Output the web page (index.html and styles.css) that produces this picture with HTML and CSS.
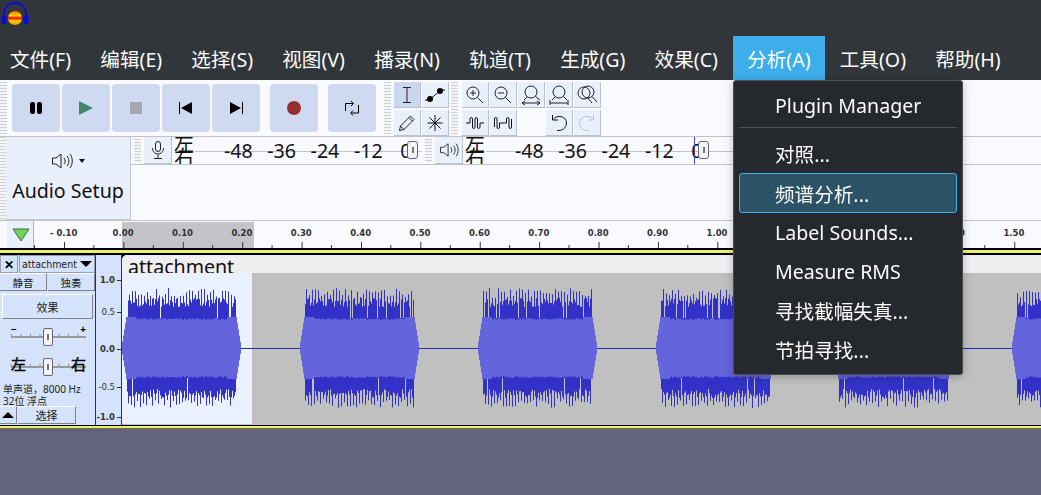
FILE: index.html
```html
<!DOCTYPE html>
<html lang="zh">
<head>
    <meta charset="UTF-8">
    <title>Audacity</title>
    <link rel="stylesheet" href="styles.css">
</head>
<body>
<div class="titlebar">
    <svg class="logo" width="30" height="28" viewBox="0 0 30 28">
        <defs>
            <linearGradient id="wave" x1="0" y1="0" x2="0" y2="1">
                <stop offset="0" stop-color="#f07000"/><stop offset=".35" stop-color="#ffd800"/>
                <stop offset=".46" stop-color="#f03010"/><stop offset=".56" stop-color="#f03010"/>
                <stop offset=".7" stop-color="#ffd800"/><stop offset="1" stop-color="#f09000"/>
            </linearGradient>
        </defs>
        <path d="M4 18 C3 6 9 3 15 3 C21 3 27 6 26 18" fill="none" stroke="#0a0ae0" stroke-width="1.8"/>
        <rect x="1.5" y="15" width="5" height="9" rx="2.5" fill="#0a0ae0"/>
        <rect x="23.5" y="15" width="5" height="9" rx="2.5" fill="#0a0ae0"/>
        <ellipse cx="15" cy="18" rx="7" ry="7" fill="url(#wave)"/>
    </svg>
</div>

<nav class="menubar">
    <span class="menu-item">文件(F)</span>
    <span class="menu-item">编辑(E)</span>
    <span class="menu-item">选择(S)</span>
    <span class="menu-item">视图(V)</span>
    <span class="menu-item">播录(N)</span>
    <span class="menu-item">轨道(T)</span>
    <span class="menu-item">生成(G)</span>
    <span class="menu-item">效果(C)</span>
    <span class="menu-item active">分析(A)</span>
    <span class="menu-item">工具(O)</span>
    <span class="menu-item">帮助(H)</span>
</nav>

<!-- analyze menu, open -->
<div class="dropdown">
    <div class="drop-row">Plugin Manager</div>
    <div class="drop-sep"></div>
    <div class="drop-row">对照...</div>
    <div class="drop-row selected">频谱分析...</div>
    <div class="drop-row">Label Sounds...</div>
    <div class="drop-row">Measure RMS</div>
    <div class="drop-row">寻找截幅失真...</div>
    <div class="drop-row">节拍寻找...</div>
</div>

<div class="toolbar">
    <div class="grip first"></div>
    <div class="transport">
        <button class="tbtn"><svg width="16" height="16" viewBox="0 0 16 16"><rect x="2" y="2" width="5" height="12" rx="2"/><rect x="9" y="2" width="5" height="12" rx="2"/></svg></button>
        <button class="tbtn"><svg width="16" height="16" viewBox="0 0 16 16"><path d="M1 1 L15 8 L1 15 Z" fill="#46876b"/></svg></button>
        <button class="tbtn"><svg width="14" height="14" viewBox="0 0 14 14"><rect x="1" y="1" width="12" height="12" fill="#a6a9b2"/></svg></button>
        <button class="tbtn"><svg width="16" height="14" viewBox="0 0 16 14"><rect x="1" y="1" width="1" height="12"/><path d="M3 7 L14 1 V13 Z"/></svg></button>
        <button class="tbtn"><svg width="16" height="14" viewBox="0 0 16 14"><rect x="14" y="1" width="1" height="12"/><path d="M13 7 L2 1 V13 Z"/></svg></button>
        <button class="tbtn spaced"><svg width="16" height="16" viewBox="0 0 16 16"><circle cx="8" cy="8" r="7" fill="#963030"/></svg></button>
        <button class="tbtn spaced"><svg width="16" height="18" viewBox="0 0 16 18" fill="none" stroke="#000"><path d="M1.5 12 V4.5 H9 M14.5 6 V14 H7"/><path d="M7 2 L9.5 4.5 L7 7 M9 11.5 L6.5 14 L9 16.5"/></svg></button>
    </div>
    <div class="grip second"></div>
    <div class="tools">
        <button class="sbtn on"><svg width="18" height="18" viewBox="0 0 18 18" fill="none" stroke="#222"><path d="M5 1.5 H13 M5 16.5 H13 M9 1.5 V16.5"/></svg></button>
        <button class="sbtn"><svg width="22" height="16" viewBox="0 0 22 16"><path d="M1 13 H5 L17 3 H21" fill="none" stroke="#111"/><circle cx="6" cy="12" r="3"/><circle cx="16" cy="4" r="3"/></svg></button>
        <button class="sbtn"><svg width="18" height="18" viewBox="0 0 18 18" fill="none" stroke="#222"><path d="M1.5 16.5 L2.5 12 L12.5 2 L16 5.5 L6 15.5 Z M11 3.5 L14.5 7 M2.5 12 L6 15.5"/></svg></button>
        <button class="sbtn"><svg width="18" height="18" viewBox="0 0 18 18" fill="none" stroke="#111"><path d="M9 1 V17 M1.5 9 H16.5 M3.5 3.5 L14.5 14.5 M14.5 3.5 L3.5 14.5"/></svg></button>
    </div>
    <div class="grip third"></div>
    <div class="zooms">
        <button class="sbtn"><svg width="20" height="20" viewBox="0 0 20 20" fill="none" stroke="#222"><circle cx="8" cy="8" r="6"/><path d="M12.5 12.5 L18 18 M5 8 H11 M8 5 V11"/></svg></button>
        <button class="sbtn"><svg width="20" height="20" viewBox="0 0 20 20" fill="none" stroke="#222"><circle cx="8" cy="8" r="6"/><path d="M12.5 12.5 L18 18 M5 8 H11"/></svg></button>
        <button class="sbtn"><svg width="22" height="22" viewBox="0 0 22 22" fill="none" stroke="#222"><circle cx="11" cy="8" r="6"/><path d="M15.5 12.5 L20 16 M7 13 L4 16 M2 19 H20 M2 19 L5 17 M2 19 L5 21 M20 19 L17 17 M20 19 L17 21"/></svg></button>
        <button class="sbtn"><svg width="22" height="22" viewBox="0 0 22 22" fill="none" stroke="#222"><circle cx="11" cy="8" r="6"/><path d="M15.5 12.5 L19 16 M7 13 L4 16 M2 19 H20 M2 16 V21 M20 16 V21"/></svg></button>
        <button class="sbtn"><svg width="22" height="20" viewBox="0 0 22 20" fill="none" stroke="#222"><circle cx="8" cy="8" r="6"/><circle cx="12" cy="7" r="6"/><path d="M16 11.5 L21 17 M11 12 L16 18"/></svg></button>
        <button class="sbtn"><svg width="18" height="12" viewBox="0 0 18 12" fill="none" stroke="#111"><path d="M0 6 H4 V2 Q4 .5 5.2 .5 Q6.5 .5 6.5 2 V10 Q6.5 11.5 7.7 11.5 Q9 11.5 9 10 V2 Q9 .5 10.2 .5 Q11.5 .5 11.5 2 V10 Q11.5 11.5 12.7 11.5 Q14 11.5 14 10 V6 H18"/></svg></button>
        <button class="sbtn"><svg width="18" height="12" viewBox="0 0 18 12" fill="none" stroke="#111"><path d="M.5 10 V2 Q.5 .5 1.7 .5 Q3 .5 3 2 V10 Q3 11.5 4.2 11.5 Q5.5 11.5 5.5 10 V6 H12.5 V2 Q12.5 .5 13.7 .5 Q15 .5 15 2 V10 Q15 11.5 16.2 11.5 Q17.5 11.5 17.5 10 V2"/></svg></button>
        <span class="sblank"></span>
        <button class="sbtn"><svg width="20" height="20" viewBox="0 0 20 20" fill="none" stroke="#111"><path d="M4.5 6 C8 1.5 17.5 3 17.5 10 C17.5 15 13 18 8 17.5"/><path d="M3.5 2 V7 H9"/></svg></button>
        <button class="sbtn"><svg width="20" height="20" viewBox="0 0 20 20" fill="none" stroke="#bcc0c6"><path d="M15.5 6 C12 1.5 2.5 3 2.5 10 C2.5 15 7 18 12 17.5"/><path d="M16.5 2 V7 H11"/></svg></button>
    </div>
</div>

<div class="midrow">
    <div class="grip setup-grip"></div>
    <div class="audio-setup">
        <div class="setup-icon">
            <svg width="22" height="18" viewBox="0 0 22 18" fill="none" stroke="#222"><path d="M1.5 6 H5 L10 2 V16 L5 12 H1.5 Z M13 6 C14.5 8 14.5 10 13 12 M16 4 C18.5 7 18.5 11 16 14 M19 2 C22 6 22 12 19 16"/></svg>
            <i class="caret"></i>
        </div>
        <div class="setup-label">Audio Setup</div>
    </div>
    <div class="meters">
        <div class="grip meter-grip"></div>
        <button class="mbtn"><svg width="14" height="20" viewBox="0 0 14 20" fill="none" stroke="#222"><rect x="4.5" y="1.5" width="5" height="10" rx="2.5"/><path d="M1.5 8 C1.5 16 12.5 16 12.5 8 M7 14.5 V18.5 M3 18.5 H11"/></svg></button>
        <div class="lr"><span>左</span><span>右</span></div>
        <div class="meter rec">
            <span class="tick">-48</span><span class="tick">-36</span><span class="tick">-24</span><span class="tick">-12</span><span class="tick last">0</span>
            <i class="thumb"></i>
        </div>
        <div class="grip meter-grip"></div>
        <button class="mbtn"><svg width="20" height="16" viewBox="0 0 22 18" fill="none" stroke="#222"><path d="M1.5 6 H5 L10 2 V16 L5 12 H1.5 Z M13 6 C14.5 8 14.5 10 13 12 M16 4 C18.5 7 18.5 11 16 14 M19 2 C22 6 22 12 19 16"/></svg></button>
        <div class="lr"><span>左</span><span>右</span></div>
        <div class="meter play">
            <span class="tick">-48</span><span class="tick">-36</span><span class="tick">-24</span><span class="tick">-12</span><span class="tick last">0</span>
            <i class="thumb"></i><i class="cursor"></i>
        </div>
    </div>
</div>

<div class="timeline">
    <div class="pin"><svg width="20" height="16" viewBox="0 0 20 16"><path d="M2 2 H18 L10 14 Z" fill="#6fd45c" stroke="#3c6a38"/></svg></div>
    <div class="ruler">
        <span>- 0.10</span><span>0.00</span><span>0.10</span><span>0.20</span><span>0.30</span><span>0.40</span><span>0.50</span><span>0.60</span><span>0.70</span><span>0.80</span><span>0.90</span><span>1.00</span><span>1.10</span><span>1.20</span><span>1.30</span><span>1.40</span><span>1.50</span>
    </div>
</div>

<div class="edge top"></div>

<div class="track">
    <div class="panel">
        <div class="panel-head">
            <button class="close">✕</button>
            <div class="track-name">attachment<i class="name-caret"></i></div>
        </div>
        <div class="mute-row"><button>静音</button><button>独奏</button></div>
        <button class="fx">效果</button>
        <div class="slider gain"><b>−</b><b>+</b><i class="knob"></i></div>
        <div class="slider pan"><b>左</b><b>右</b><i class="knob"></i></div>
        <div class="info">单声道，8000 Hz<br>32位 浮点</div>
        <div class="panel-foot"><button class="collapse"><i></i></button><button class="pick">选择</button></div>
    </div>
    <div class="vruler"><span>1.0</span><span>0.5</span><span>0.0</span><span>-0.5</span><span>-1.0</span></div>
    <div class="clip">
        <div class="clip-title">attachment</div>
        <canvas id="wave-canvas" width="919" height="151"></canvas>
    </div>
</div>

<div class="edge bottom"></div>

<script src="waveform.js"></script>
</body>
</html>
```

FILE: styles.css
```css
* {
    box-sizing: border-box;
}
body {
    font-family: "Noto Sans", "Noto Sans CJK SC", sans-serif;
    background-color: #62637f;
    margin: 0;
    width: 1041px;
    height: 495px;
    overflow: hidden;
    position: relative;
}
button {
    font-family: inherit;
    padding: 0;
    border: none;
    display: flex;
    align-items: center;
    justify-content: center;
}

/* title and menu */
.titlebar {
    height: 36px;
    background-color: #31363b;
}
.logo {
    display: block;
}
.menubar {
    height: 44px;
    background-color: #31363b;
    display: flex;
    color: #fcfcfc;
    font-size: 19.6px;
}
.menu-item {
    padding: 0 14.6px;
    display: flex;
    align-items: center;
    white-space: nowrap;
}
.menu-item:first-child {
    padding-left: 10px;
}
.menu-item.active {
    background-color: #3daee9;
}
.dropdown {
    position: absolute;
    left: 733px;
    top: 80px;
    width: 230px;
    height: 295px;
    background-color: #25282c;
    border: 1px solid #4b4e52;
    border-radius: 3px;
    box-shadow: 0 2px 8px rgba(0, 0, 0, .25);
    padding: 5px 5px;
    color: #fcfcfc;
    font-size: 19.6px;
    z-index: 5;
}
.drop-row {
    height: 39px;
    padding-left: 35px;
    display: flex;
    align-items: center;
    border: 1px solid transparent;
    border-radius: 3px;
}
.drop-row.selected {
    height: 40px;
    background-color: #2c5266;
    border-color: #3daee9;
}
.drop-sep {
    height: 1px;
    background-color: #4b4e52;
    margin: 2px 0 6px;
}

/* toolbars */
.toolbar {
    height: 57px;
    background-color: #f9faff;
    border-bottom: 1px solid #c2c2c2;
    display: flex;
    position: relative;
}
.grip {
    width: 7px;
    background-image: repeating-linear-gradient(#cfd0d4 0 1px, transparent 1px 3px);
    background-color: #f4f5f8;
}
.grip.first {
    margin: 2px 5px 2px 0;
}
.grip.second {
    margin: 2px 3px 2px 8px;
}
.grip.third {
    margin: 2px 4px 2px 2px;
}
.transport {
    display: flex;
    gap: 2px;
    padding-top: 4px;
}
.tbtn {
    width: 48px;
    height: 48px;
    background-color: #cfdaf0;
    border-radius: 4px;
}
.tbtn.spaced {
    margin-left: 8px;
}
.tools {
    display: grid;
    grid-template-columns: 27px 27px;
    grid-auto-rows: 26px;
    gap: 2px 1px;
    padding-top: 2px;
}
.zooms {
    display: grid;
    grid-template-columns: repeat(5, 27px);
    grid-auto-rows: 26px;
    gap: 2px 1px;
    padding-top: 2px;
}
.sbtn {
    background-color: #e9f0fb;
    border-right: 1px solid #bcc0c8;
    border-bottom: 1px solid #bcc0c8;
}
.sbtn.on {
    background-color: #c9d8f0;
}
.midrow {
    height: 84px;
    background-color: #f9faff;
    border-bottom: 1px solid #c2c2c2;
    display: flex;
}
.grip.setup-grip {
    width: 6px;
}
.audio-setup {
    width: 125px;
    background-color: #e9f0fb;
    border-right: 1px solid #c2c6d0;
    border-bottom: 1px solid #c2c6d0;
    text-align: center;
    color: #111;
}
.setup-icon {
    height: 39px;
    display: flex;
    align-items: center;
    justify-content: center;
    gap: 6px;
    padding-top: 9px;
}
.caret {
    width: 0;
    height: 0;
    border-left: 3px solid transparent;
    border-right: 3px solid transparent;
    border-top: 4px solid #111;
}
.setup-label {
    font-size: 19.6px;
    line-height: 30px;
}
.meters {
    flex: 1;
    height: 28px;
    border-bottom: 1px solid #c2c2c2;
    display: flex;
}
.grip.meter-grip {
    margin: 2px 3px 2px 3px;
}
.mbtn {
    width: 28px;
    height: 27px;
    background-color: #e9f0fb;
    border-right: 1px solid #bcc0c8;
    border-bottom: 1px solid #bcc0c8;
}
.lr {
    width: 23px;
    padding-left: 2px;
    height: 27px;
    overflow: hidden;
    font-size: 20px;
    line-height: 14px;
    color: #111;
}
.lr span {
    display: block;
}
.meter {
    position: relative;
    height: 27px;
    display: flex;
    font-size: 19.6px;
    line-height: 27px;
    color: #111;
    background: linear-gradient(#c2c2c2, #c2c2c2) 0 14px / 100% 1px no-repeat;
}
.meter.rec {
    width: 227px;
    padding-left: 29px;
}
.meter.play {
    width: 280px;
    padding-left: 29px;
    border-right: 1px solid #c2c2c2;
}
.tick {
    flex: 0 0 43.3px;
    white-space: nowrap;
}
.tick.last {
    margin-left: 3px;
}
.thumb {
    position: absolute;
    top: 4px;
    left: 212px;
    width: 11px;
    height: 18px;
    background: linear-gradient(#777, #777) center / 2px 6px no-repeat #f4f4f6;
    border: 1px solid #666;
    border-radius: 3px;
}
.cursor {
    position: absolute;
    left: 208px;
    top: 0;
    width: 1px;
    height: 27px;
    background-color: #4040e0;
}

/* ruler */
.timeline {
    height: 27px;
    background-color: #f9faff;
    display: flex;
}
.pin {
    margin-left: 7px;
    flex: 0 0 27px;
    padding-left: 2px;
    background-color: #e9f0fb;
    border-right: 1px solid #b0b4bc;
    display: flex;
    align-items: center;
    justify-content: center;
}
.ruler {
    flex: 1;
    min-width: 0;
    overflow: hidden;
    display: flex;
    font-family: "DejaVu Sans", sans-serif;
    font-size: 8.5px;
    font-weight: bold;
    color: #333;
    background:
        linear-gradient(90deg, #333 1px, transparent 1px) 30px 100% / 59.4px 6px repeat-x,
        linear-gradient(90deg, #333 1px, transparent 1px) 0 100% / 59.4px 3px repeat-x,
        linear-gradient(#c4c4c8, #c4c4c8) 88px 1px / 132px 26px no-repeat;
}
.ruler span {
    flex: 0 0 59.4px;
    text-align: center;
    line-height: 25px;
    height: 25px;
    white-space: nowrap;
}
.edge {
    background: linear-gradient(#000 0 2px, #f0f06a 2px 5px, #000 5px);
}
.edge.top {
    height: 7px;
}
.edge.bottom {
    height: 5px;
    background: linear-gradient(#000 0 1px, #f0f06a 1px 3px, #6a6a60 3px);
}

/* track */
.track {
    height: 170px;
    display: flex;
    background-color: #000;
}
.panel {
    width: 96px;
    background-color: #d4e2fb;
    border-right: 1px solid #333;
    font-size: 10.5px;
    color: #222;
    position: relative;
}
.panel-head {
    display: flex;
    height: 18px;
    gap: 1px;
}
.close {
    width: 18px;
    background-color: #d4e2fb;
    border: 1px solid #9aa0ac;
    font-size: 12px;
    font-weight: bold;
    color: #000;
}
.track-name {
    flex: 1;
    border: 1px solid #9aa0ac;
    font-size: 10.5px;
    line-height: 16px;
    padding-left: 2px;
    display: flex;
    justify-content: space-between;
    align-items: center;
    padding-right: 2px;
    font-family: "DejaVu Sans Condensed", "DejaVu Sans", sans-serif;
}
.name-caret {
    border-left: 6px solid transparent;
    border-right: 6px solid transparent;
    border-top: 6px solid #000;
}
.mute-row {
    display: flex;
    height: 18px;
    gap: 1px;
}
.mute-row button {
    flex: 1;
    background-color: #d4e2fb;
    border-right: 1px solid #80848c;
    border-bottom: 1px solid #80848c;
    border-top: 1px solid #fff;
    font-size: 10.5px;
    color: #222;
}
.fx {
    width: 91px;
    height: 25px;
    margin: 3px 0 0 2px;
    background-color: #d4e2fb;
    border: 1px solid #fff;
    border-right-color: #80848c;
    border-bottom-color: #80848c;
    font-size: 11px;
    color: #222;
}
.slider {
    position: relative;
    margin: 0 9px 0 11px;
    height: 30px;
    background:
        linear-gradient(90deg, #888 1px, transparent 1px) 0 12px / 9.5px 2px repeat-x,
        linear-gradient(#999, #999) 0 14px / 100% 2px no-repeat;
}
.slider.gain {
    margin-top: 3px;
}
.slider b {
    position: absolute;
    top: 0;
    font-weight: bold;
    font-size: 10px;
    color: #000;
}
.slider b:first-child {
    left: 0;
}
.slider b:nth-child(2) {
    right: 0;
}
.slider.pan b {
    font-size: 15px;
    font-weight: normal;
    -webkit-text-stroke: .4px #000;
    top: 2px;
    line-height: 20px;
}
.knob {
    position: absolute;
    left: 32px;
    top: 6px;
    width: 10px;
    height: 18px;
    background: linear-gradient(#777, #777) center / 2px 6px no-repeat #f4f4f6;
    border: 1px solid #666;
    border-radius: 2px;
}
.info {
    font-size: 10px;
    line-height: 12px;
    padding-left: 3px;
    height: 26px;
    margin-top: 1px;
    white-space: nowrap;
    overflow: hidden;
}
.panel-foot {
    position: absolute;
    left: 0;
    bottom: 1px;
    display: flex;
    height: 18px;
    gap: 1px;
}
.collapse,
.pick {
    background-color: #d4e2fb;
    border-top: 1px solid #fff;
    border-right: 1px solid #80848c;
    border-bottom: 1px solid #80848c;
}
.collapse {
    width: 17px;
}
.collapse i {
    border-left: 6px solid transparent;
    border-right: 6px solid transparent;
    border-bottom: 6px solid #000;
}
.pick {
    width: 58px;
    font-size: 11px;
    color: #222;
}
.vruler {
    width: 26px;
    background-color: #d4e2fb;
    border-right: 1px solid #333;
    font-family: "DejaVu Sans", sans-serif;
    font-size: 8.5px;
    font-weight: bold;
    color: #333;
    display: flex;
    flex-direction: column;
    align-items: flex-end;
    padding: 20px 6px 0 0;
}
.vruler span {
    height: 10px;
    line-height: 10px;
    position: relative;
}
.vruler span:nth-child(even) {
    font-weight: normal;
}
.vruler span:nth-child(2) {
    margin-top: 22px;
}
.vruler span:nth-child(3) {
    margin-top: 27px;
}
.vruler span:nth-child(4) {
    margin-top: 28px;
}
.vruler span:nth-child(5) {
    margin-top: 20px;
}
.vruler span::after {
    content: "";
    position: absolute;
    right: -6px;
    top: 5px;
    width: 4px;
    height: 1px;
    background-color: #333;
}
.clip {
    flex: 1;
    background-color: #c0c0c0;
    border-top-left-radius: 5px;
    overflow: hidden;
    display: flex;
    flex-direction: column;
}
.clip-title {
    height: 18px;
    background-color: #efeff1;
    font-size: 19.6px;
    line-height: 24px;
    padding-left: 6px;
    color: #111;
    overflow: hidden;
}
#wave-canvas {
    display: block;
}
```

FILE: waveform.js
```js
// draws the repeating bursts of the clip, seeded so every load looks the same
var canvas = document.getElementById('wave-canvas');
var ctx = canvas.getContext('2d');
var mid = 75;
var seed = 7;

function rnd() {
    seed = (seed * 16807) % 2147483647;
    return seed / 2147483647;
}

// peak height for one column, spikes on a rough comb over a solid band
function peak(x) {
    if (x % 3 == 1) {
        return 50 + rnd() * 10;
    }
    if (rnd() < .07) {
        return 30;
    }
    return 41 + rnd() * 9;
}

ctx.fillStyle = '#e9f1ff';
ctx.fillRect(0, 0, 130, canvas.height);

for (var x = 0; x < canvas.width; x++) {
    var pos = x % 178;
    if (pos > 118) {
        ctx.fillStyle = '#2a2ab0';
        ctx.fillRect(x, mid, 1, 1);
        continue;
    }
    var edge = Math.min(pos, 118 - pos);

    if (edge > 4) {
        var up = peak(x);
        var down = peak(x + 1);
        ctx.fillStyle = '#3232c8';
        ctx.fillRect(x, mid - up, 1, up + down);
    }

    // rms bulges a little near the start and the end of a burst
    var rms = edge < 14 ? 31 : 28 + rnd() * 2;
    rms = rms * Math.min(1, (edge + 1) / 5);
    ctx.fillStyle = '#6464dc';
    ctx.fillRect(x, mid - rms, 1, rms * 2);
}
```
